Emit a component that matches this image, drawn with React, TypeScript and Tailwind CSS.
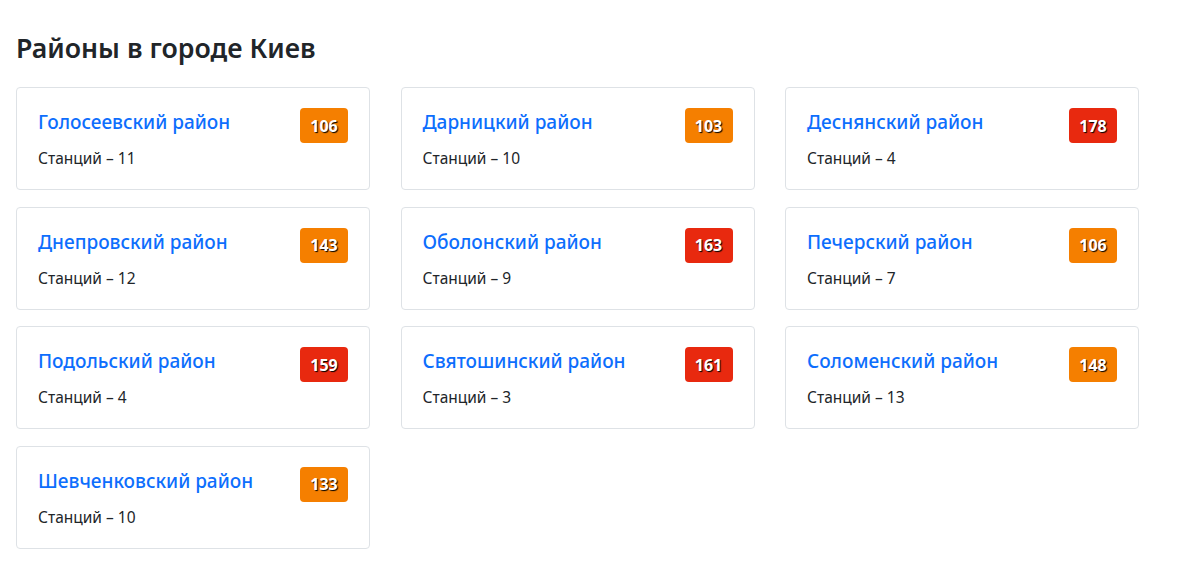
const districts = [
  { name: 'Голосеевский район', stations: 11, aqi: 106 },
  { name: 'Дарницкий район', stations: 10, aqi: 103 },
  { name: 'Деснянский район', stations: 4, aqi: 178 },
  { name: 'Днепровский район', stations: 12, aqi: 143 },
  { name: 'Оболонский район', stations: 9, aqi: 163 },
  { name: 'Печерский район', stations: 7, aqi: 106 },
  { name: 'Подольский район', stations: 4, aqi: 159 },
  { name: 'Святошинский район', stations: 3, aqi: 161 },
  { name: 'Соломенский район', stations: 13, aqi: 148 },
  { name: 'Шевченковский район', stations: 10, aqi: 133 },
];

const DistrictCard = ({ name, stations, aqi }: { name: string; stations: number; aqi: number }) => {
  const red = aqi > 150;
  return (
    <div className="flex h-[103px] items-start justify-between rounded border border-[#dee2e6] bg-white px-[21px] pt-[20px]">
      <div className="flex flex-col">
        <a href="#" className="text-[19px] font-medium leading-[28px] text-[#0d6efd]">
          {name}
        </a>
        <p className="mt-[11px] text-[15.5px] leading-[22px] text-[#212529]">Станций – {stations}</p>
      </div>
      <span
        className={`flex h-[35px] w-[48px] items-center justify-center rounded-[4px] text-[16px] font-bold text-white [text-shadow:1px_1px_1px_#000] ${
          red ? 'bg-[#e8290f]' : 'bg-[#f57f00]'
        }`}
      >
        {aqi}
      </span>
    </div>
  );
};

const App = () => {
  return (
    <div className="min-h-[567px] bg-white px-4 pt-[30px] font-['Noto_Sans',sans-serif]">
      <h2 className="text-[26.7px] font-semibold leading-[36px] text-[#212529]">Районы в городе Киев</h2>
      <div className="mt-[21px] grid w-[1123px] grid-cols-3 gap-x-[30.5px] gap-y-[16.5px]">
        {districts.map((d) => (
          <DistrictCard key={d.name} {...d} />
        ))}
      </div>
    </div>
  );
};

export default App;
